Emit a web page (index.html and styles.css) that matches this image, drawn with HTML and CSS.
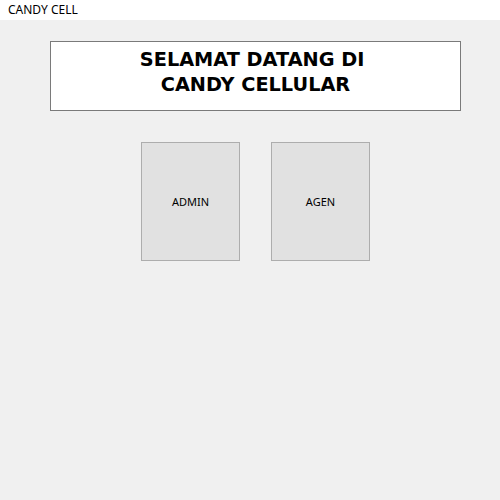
FILE: index.html
```html
<!DOCTYPE html>
<html lang="id">
<head>
    <meta charset="UTF-8">
    <meta name="viewport" content="width=device-width, initial-scale=1.0">
    <title>CANDY CELL</title>
    <link rel="stylesheet" href="styles.css">
</head>
<body>
    <!-- Title bar -->
    <div class="title-bar">CANDY CELL</div>

    <div class="main">
        <!-- Welcome header -->
        <div class="welcome-box">
            <h1>SELAMAT DATANG DI&nbsp;<br>CANDY CELLULAR</h1>
        </div>

        <!-- Login choices -->
        <div class="button-row">
            <button class="choice-btn">ADMIN</button>
            <button class="choice-btn">AGEN</button>
        </div>
    </div>
</body>
</html>
```

FILE: styles.css
```css
html, body {
    margin: 0;
    height: 100%;
}
body {
    font-family: "Noto Sans", "Open Sans", sans-serif;
    background-color: #f0f0f0;
    color: #000;
}
.title-bar {
    height: 20px;
    background-color: #fff;
    font-size: 12px;
    line-height: 20px;
    padding-left: 8px;
    box-sizing: border-box;
}
.main {
    padding: 21px 0 0 50px;
    width: 411px;
}
.welcome-box {
    height: 70px;
    background-color: #fff;
    border: 1px solid #7a7a7a;
    box-sizing: border-box;
    display: flex;
    align-items: flex-start;
    justify-content: center;
    padding-top: 5px;
}
.welcome-box h1 {
    margin: 0;
    font-family: "DejaVu Sans", sans-serif;
    font-size: 19.3px;
    line-height: 25px;
    font-weight: bold;
    text-align: center;
}
.button-row {
    display: flex;
    justify-content: center;
    gap: 31px;
    margin-top: 31px;
}
.choice-btn {
    width: 99px;
    height: 119px;
    background-color: #e1e1e1;
    border: 1px solid #adadad;
    font-family: "Noto Sans", "Open Sans", sans-serif;
    font-size: 11px;
    color: #000;
    padding: 0;
}
```
